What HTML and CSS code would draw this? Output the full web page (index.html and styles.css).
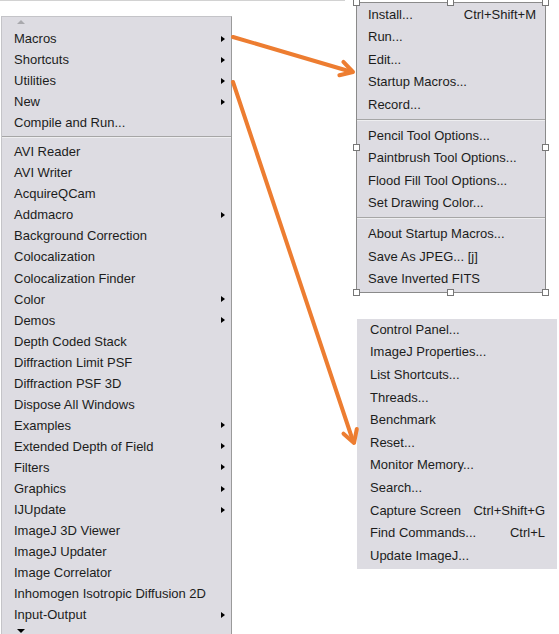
FILE: index.html
```html
<!DOCTYPE html>
<html lang="en">
<head>
    <meta charset="UTF-8">
    <title>ImageJ Plugins Menu</title>
    <link rel="stylesheet" href="styles.css">
</head>
<body>
<div class="topline"></div>

<div class="stage">
    <!-- Plugins menu -->
    <div class="menu menu-main">
        <div class="scroll scroll-up"><span class="tri-up"></span></div>
        <div class="item sub">Macros</div>
        <div class="item sub">Shortcuts</div>
        <div class="item sub">Utilities</div>
        <div class="item sub">New</div>
        <div class="item">Compile and Run...</div>
        <div class="sep"></div>
        <div class="item">AVI Reader</div>
        <div class="item">AVI Writer</div>
        <div class="item">AcquireQCam</div>
        <div class="item sub">Addmacro</div>
        <div class="item">Background Correction</div>
        <div class="item">Colocalization</div>
        <div class="item">Colocalization Finder</div>
        <div class="item sub">Color</div>
        <div class="item sub">Demos</div>
        <div class="item">Depth Coded Stack</div>
        <div class="item">Diffraction Limit PSF</div>
        <div class="item">Diffraction PSF 3D</div>
        <div class="item">Dispose All Windows</div>
        <div class="item sub">Examples</div>
        <div class="item sub">Extended Depth of Field</div>
        <div class="item sub">Filters</div>
        <div class="item sub">Graphics</div>
        <div class="item sub">IJUpdate</div>
        <div class="item">ImageJ 3D Viewer</div>
        <div class="item">ImageJ Updater</div>
        <div class="item">Image Correlator</div>
        <div class="item">Inhomogen Isotropic Diffusion 2D</div>
        <div class="item sub">Input-Output</div>
        <div class="scroll scroll-down"><span class="tri-down"></span></div>
    </div>

    <div class="side">
        <!-- Macros submenu (selected picture) -->
        <div class="menu menu-macros">
            <div class="item"><span>Install...</span><span class="key">Ctrl+Shift+M</span></div>
            <div class="item">Run...</div>
            <div class="item">Edit...</div>
            <div class="item">Startup Macros...</div>
            <div class="item">Record...</div>
            <div class="sep"></div>
            <div class="item">Pencil Tool Options...</div>
            <div class="item">Paintbrush Tool Options...</div>
            <div class="item">Flood Fill Tool Options...</div>
            <div class="item">Set Drawing Color...</div>
            <div class="sep"></div>
            <div class="item">About Startup Macros...</div>
            <div class="item">Save As JPEG... [j]</div>
            <div class="item">Save Inverted FITS</div>

            <span class="handle h-tl"></span>
            <span class="handle h-tc"></span>
            <span class="handle h-tr"></span>
            <span class="handle h-ml"></span>
            <span class="handle h-mr"></span>
            <span class="handle h-bl"></span>
            <span class="handle h-bc"></span>
            <span class="handle h-br"></span>
        </div>

        <!-- Utilities submenu -->
        <div class="menu menu-utils">
            <div class="item">Control Panel...</div>
            <div class="item">ImageJ Properties...</div>
            <div class="item">List Shortcuts...</div>
            <div class="item">Threads...</div>
            <div class="item">Benchmark</div>
            <div class="item">Reset...</div>
            <div class="item">Monitor Memory...</div>
            <div class="item">Search...</div>
            <div class="item"><span>Capture Screen</span><span class="key">Ctrl+Shift+G</span></div>
            <div class="item"><span>Find Commands...</span><span class="key">Ctrl+L</span></div>
            <div class="item">Update ImageJ...</div>
        </div>
    </div>
</div>

<svg class="arrows" width="559" height="634" viewBox="0 0 559 634">
    <g fill="none" stroke="#ed7d31" stroke-width="4" stroke-linecap="round" stroke-linejoin="round">
        <line x1="233" y1="37" x2="352" y2="72"/>
        <polyline points="343.4,61.9 353,72 339.4,75.3"/>
        <line x1="233" y1="82" x2="353" y2="441"/>
        <polyline points="343.5,433.7 354,443 356.8,429"/>
    </g>
</svg>
</body>
</html>
```

FILE: styles.css
```css
:root {
    --menu-bg: #dddce2;
    --menu-text: #1c1c1c;
    --menu-border: #8a8a8a;
    --sep: #a6a6a6;
}

* {
    margin: 0;
    padding: 0;
    box-sizing: border-box;
}

body {
    width: 559px;
    height: 634px;
    overflow: hidden;
    position: relative;
    background: #fff;
    font-family: 'Liberation Sans', Arial, sans-serif;
    font-size: 13px;
    color: var(--menu-text);
}

.topline {
    width: 345px;
    height: 1px;
    background: #d2d2d2;
}

.stage {
    display: flex;
    align-items: flex-start;
}

.menu {
    background: var(--menu-bg);
}

.item {
    display: flex;
    justify-content: space-between;
    align-items: center;
    white-space: nowrap;
}

.sep {
    border-top: 1px solid var(--sep);
    border-bottom: 1px solid #eeeef0;
}

/* left menu */
.menu-main {
    margin-top: 15px;
    margin-left: 1px;
    width: 231px;
    border-left: 1px solid #c4c4c8;
    border-top: 1px solid #c4c4c8;
    border-right: 1px solid #9a9a9a;
}

.menu-main .item {
    height: 21.05px;
    padding: 0 6px 0 12px;
}

.menu-main .sub::after {
    content: '';
    border-left: 4px solid #000;
    border-top: 3.5px solid transparent;
    border-bottom: 3.5px solid transparent;
}

.menu-main .sep {
    margin: 3px 0 3px 0;
    height: 2px;
}

.scroll {
    padding-left: 15px;
}

.scroll-up {
    height: 11px;
    padding-top: 3px;
}

.scroll-down {
    height: 12px;
    padding-top: 4px;
}

.tri-up,
.tri-down {
    display: block;
    width: 0;
    height: 0;
    border-left: 4px solid transparent;
    border-right: 4px solid transparent;
}

.tri-up {
    border-bottom: 4px solid #a9a9ad;
}

.tri-down {
    border-top: 4px solid #000;
}

/* right column */
.side {
    display: flex;
    flex-direction: column;
    margin-left: 124px;
    margin-top: 1px;
}

.menu-macros {
    position: relative;
    width: 190px;
    border: 1px solid var(--menu-border);
    padding-bottom: 2px;
}

.menu-macros .item {
    height: 22.5px;
    padding: 0 9px 0 11px;
}

.menu-macros .sep {
    margin: 3px 0 3.5px 0;
    height: 2px;
}

.menu-utils {
    width: 200px;
    margin-top: 26px;
    margin-left: 1px;
    padding-bottom: 1px;
}

.menu-utils .item {
    height: 22.6px;
    padding: 0 12px 2px 13px;
}

/* selection handles around the picture */
.handle {
    position: absolute;
    width: 7px;
    height: 7px;
    background: #fff;
    border: 1px solid #777;
}

.h-tl { left: -4px; top: -4px; }
.h-tc { left: 50%; top: -4px; margin-left: -4px; }
.h-tr { right: -4px; top: -4px; }
.h-ml { left: -4px; top: 50%; margin-top: -4px; }
.h-mr { right: -4px; top: 50%; margin-top: -4px; }
.h-bl { left: -4px; bottom: -4px; }
.h-bc { left: 50%; bottom: -4px; margin-left: -4px; }
.h-br { right: -4px; bottom: -4px; }

.arrows {
    position: absolute;
    left: 0;
    top: 0;
    pointer-events: none;
}
```
